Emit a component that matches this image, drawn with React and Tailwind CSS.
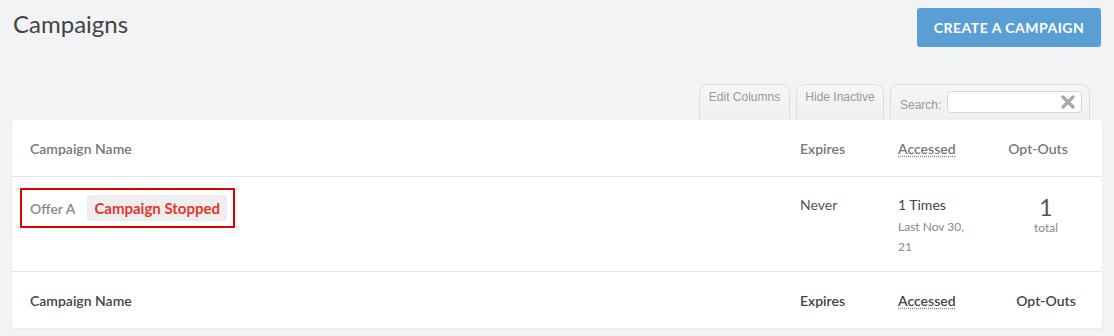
import React from 'react'

const font = { fontFamily: 'Lato, "Open Sans", sans-serif' }

function Tab({ children, className = '' }) {
  return (
    <div
      className={`h-[36px] rounded-t-[9px] border border-b-0 border-[#dcdcdc] bg-gradient-to-b from-[#f6f6f6] to-[#efeff1] text-[12px] text-[#9a9a9a] ${className}`}
      style={{ fontFamily: '"Liberation Sans", Arial, sans-serif' }}
    >
      {children}
    </div>
  )
}

function Accessed({ className = '' }) {
  return (
    <span className={`underline decoration-dotted decoration-[#888] underline-offset-[2px] ${className}`}>
      Accessed
    </span>
  )
}

export default function App() {
  return (
    <div className="min-h-[336px] w-[1114px] bg-[#f2f3f5]" style={font}>
      {/* top bar */}
      <div className="flex items-start justify-between pl-[13px] pr-[13px] pt-[8px]">
        <h1 className="mt-[1px] text-[24px] font-normal leading-[30px] text-[#444]">Campaigns</h1>
        <button className="h-[39px] w-[184px] rounded-[3px] bg-[#5a9fd4] text-[14px] font-bold tracking-[0.5px] text-white">
          CREATE A CAMPAIGN
        </button>
      </div>

      {/* tabs */}
      <div className="mt-[37px] flex justify-end gap-[6px] pr-[24px]">
        <Tab className="w-[91px] pt-[3px] text-center">Edit Columns</Tab>
        <Tab className="w-[88px] pt-[3px] text-center">Hide Inactive</Tab>
        <Tab className="flex w-[200px] items-start pl-[9px] pt-[7px]">
          <span className="mt-[4px]">Search:</span>
          <div className="ml-[6px] -mt-[1px] flex h-[22px] w-[135px] items-center justify-end rounded-[4px] border border-[#d6d6d6] bg-white pr-[6px]">
            <svg width="14" height="14" viewBox="0 0 14 14">
              <path d="M2 2 L12 12 M12 2 L2 12" stroke="#a9a9a9" strokeWidth="3.2" strokeLinecap="round" />
            </svg>
          </div>
        </Tab>
      </div>

      {/* card */}
      <div className="mx-[12px] w-[1090px] rounded-[4px] bg-white shadow-[0_1px_3px_rgba(0,0,0,0.06)]">
        <div className="grid h-[57px] grid-cols-[1fr_98px_92px_112px] items-center border-b border-[#e6e6e6] pl-[18px] text-[14px] font-semibold text-[#777]">
          <div>Campaign Name</div>
          <div>Expires</div>
          <div><Accessed /></div>
          <div className="pr-[16px] text-center">Opt-Outs</div>
        </div>

        <div className="grid h-[95px] grid-cols-[1fr_98px_92px_112px] items-start border-b border-[#e6e6e6] pl-[8px] pt-[11px] text-[14px]">
          <div>
            <div className="inline-flex items-center border-2 border-[#e00000] py-[5px] pl-[8px] pr-[6px]">
              <span className="font-semibold text-[#888]">Offer A</span>
              <span className="ml-[12px] rounded-[4px] bg-[#eeeeee] px-[7px] py-[2px] text-[15px] font-bold leading-[22px] text-[#e5352b]">
                Campaign Stopped
              </span>
            </div>
          </div>
          <div className="pt-[5px] leading-[24px] text-[#555]">Never</div>
          <div className="pr-[12px] pt-[5px]">
            <div className="leading-[24px] text-[#444]">1 Times</div>
            <div className="w-[74px] text-[12px] leading-[20px] text-[#888]">Last Nov 30, 21</div>
          </div>
          <div className="pt-[6px] text-center">
            <div className="text-[23px] font-normal leading-[26px] text-[#555]">1</div>
            <div className="text-[12px] leading-[16px] text-[#888]">total</div>
          </div>
        </div>

        <div className="grid h-[56px] grid-cols-[1fr_98px_92px_112px] items-center pl-[18px] text-[14px] font-semibold text-[#444]">
          <div>Campaign Name</div>
          <div>Expires</div>
          <div><Accessed /></div>
          <div className="text-center">Opt-Outs</div>
        </div>
      </div>
    </div>
  )
}
